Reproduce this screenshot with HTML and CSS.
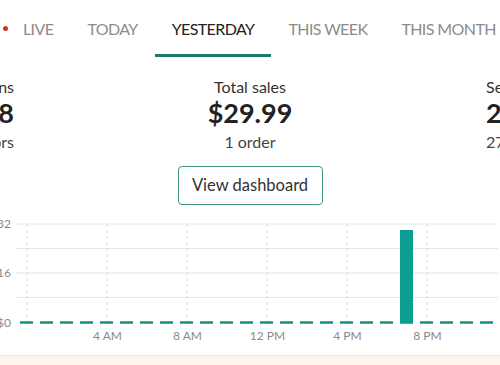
FILE: index.html
```html
<!DOCTYPE html>
<html>
<head>
<meta charset="utf-8">
<link rel="stylesheet" href="styles.css">
</head>
<body>
<div class="page">
  <nav class="tabs">
    <div class="tab tab-live"><span class="dot"></span>LIVE</div>
    <div class="tab">TODAY</div>
    <div class="tab active">YESTERDAY</div>
    <div class="tab">THIS WEEK</div>
    <div class="tab">THIS MONTH</div>
  </nav>

  <section class="stats">
    <div class="stat stat-left">
      <div class="label">Online store sessions</div>
      <div class="value">18</div>
      <div class="sub">12 visitors</div>
    </div>
    <div class="stat stat-center">
      <div class="label">Total sales</div>
      <div class="value">$29.99</div>
      <div class="sub">1 order</div>
      <button class="btn">View dashboard</button>
    </div>
    <div class="stat stat-right">
      <div class="label">Sessions</div>
      <div class="value">2</div>
      <div class="sub">27 views</div>
    </div>
  </section>

  <svg class="chart" width="500" height="141" viewBox="0 215 500 141">
    <g class="hgrid">
      <line x1="16" y1="225" x2="498" y2="225"/>
      <line x1="16" y1="249.5" x2="498" y2="249.5"/>
      <line x1="16" y1="274" x2="498" y2="274"/>
      <line x1="16" y1="298.5" x2="498" y2="298.5"/>
    </g>
    <g class="vgrid">
      <line x1="27" y1="225" x2="27" y2="323"/>
      <line x1="107" y1="225" x2="107" y2="323"/>
      <line x1="187" y1="225" x2="187" y2="323"/>
      <line x1="267" y1="225" x2="267" y2="323"/>
      <line x1="347" y1="225" x2="347" y2="323"/>
      <line x1="427" y1="225" x2="427" y2="323"/>
    </g>
    <line class="baseline" x1="20" y1="323.5" x2="496" y2="323.5"/>
    <rect class="bar" x="400" y="231" width="13" height="93"/>
    <g class="ylabels">
      <text x="11" y="229">$32</text>
      <text x="11" y="278">$16</text>
      <text x="11" y="327.5">$0</text>
    </g>
    <g class="xlabels">
      <text x="107.5" y="340.5">4 AM</text>
      <text x="187.5" y="340.5">8 AM</text>
      <text x="267.5" y="340.5">12 PM</text>
      <text x="347.5" y="340.5">4 PM</text>
      <text x="427.5" y="340.5">8 PM</text>
    </g>
  </svg>

  <div class="banner"></div>
</div>
</body>
</html>
```

FILE: styles.css
```css
html, body {
  margin: 0;
  padding: 0;
  background: #ffffff;
}

.page {
  width: 500px;
  height: 365px;
  overflow: hidden;
  font-family: Lato, "Liberation Sans", sans-serif;
  color: #222;
}

.tabs {
  display: flex;
  margin-left: -14px;
  white-space: nowrap;
}

.tab {
  padding: 19px 17px 16px 17px;
  line-height: 19px;
  font-size: 16px;
  letter-spacing: -0.6px;
  color: #8c8c8c;
  border-bottom: 3px solid transparent;
  flex: none;
  display: flex;
  align-items: center;
}

.tab.active {
  color: #222;
  border-bottom-color: #1b7b67;
}

.dot {
  width: 5px;
  height: 5px;
  border-radius: 50%;
  background: #d2331f;
  margin-right: 15px;
}

.stats {
  display: flex;
  justify-content: space-between;
  margin-top: 20px;
}

.stat {
  display: flex;
  flex-direction: column;
  white-space: nowrap;
  line-height: 1.2;
}

.stat-left {
  width: 14px;
  align-items: flex-end;
}

.stat-right {
  width: 14px;
  align-items: flex-start;
}

.stat-center {
  align-items: center;
}

.label {
  font-size: 16px;
  color: #333;
}

.value {
  font-size: 27px;
  font-weight: 700;
  color: #222;
  margin-top: 1px;
}

.sub {
  font-size: 16px;
  color: #444;
  margin-top: 2px;
}

.btn {
  margin-top: 15px;
  width: 145px;
  height: 39px;
  border: 1px solid #3f9282;
  border-radius: 4px;
  background: #fff;
  font-family: Lato, "Liberation Sans", sans-serif;
  font-size: 16.5px;
  color: #333;
  padding: 0;
}

.chart {
  display: block;
  margin-top: 9px;
}

.hgrid line {
  stroke: #e6e6e6;
  stroke-width: 1;
}

.vgrid line {
  stroke: #dcdcdc;
  stroke-width: 1;
  stroke-dasharray: 3 3;
}

.baseline {
  stroke: #16917e;
  stroke-width: 2.5;
  stroke-dasharray: 13 7;
}

.bar {
  fill: #0d9e93;
}

.ylabels text {
  font-family: Lato, "Liberation Sans", sans-serif;
  font-size: 12px;
  fill: #8a8a8a;
  text-anchor: end;
}

.xlabels text {
  font-family: Lato, "Liberation Sans", sans-serif;
  font-size: 12px;
  fill: #8a8a8a;
  text-anchor: middle;
}

.banner {
  height: 20px;
  background: #fdf4ec;
  border-top: 1px solid #f3e6dc;
}
```
